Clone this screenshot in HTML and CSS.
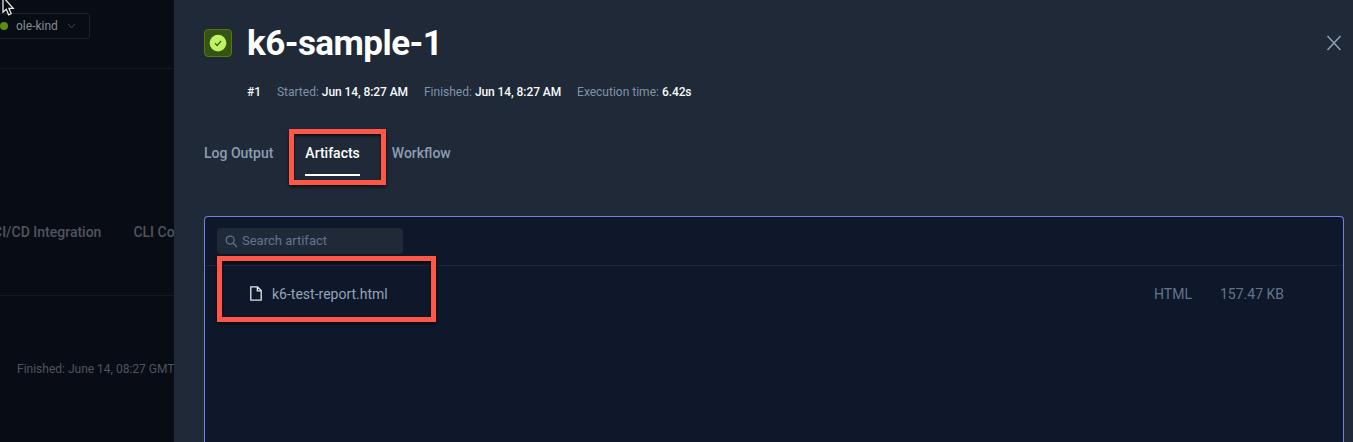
FILE: index.html
```html
<!DOCTYPE html>
<html lang="en">
<head>
<meta charset="utf-8">
<title>k6-sample-1</title>
<link rel="stylesheet" href="styles.css">
</head>
<body>
<div class="app">
  <aside class="page">
    <header class="topbar">
      <div class="cluster">
        <span class="status-dot"></span>
        <span class="cluster-name">ole-kind</span>
        <svg class="chevron" viewBox="0 0 9 6"><path d="M1 .8 4.5 5 8 .8"/></svg>
      </div>
    </header>
    <nav class="page-tabs"><span>CI/CD Integration</span><span>CLI Commands</span></nav>
    <p class="finished">Finished: June 14, 08:27 GMT</p>
  </aside>
  <main class="drawer">
    <header class="head">
      <span class="badge"><svg viewBox="0 0 28 28"><circle cx="14" cy="14.2" r="9" /><path d="M10.7 14.2 13.1 16.7 17.3 11.6"/></svg></span>
      <h1>k6-sample-1</h1>
      <svg class="close" viewBox="0 0 16 16"><path d="M1.5 1 14.5 15M14.5 1 1.5 15"/></svg>
    </header>
    <div class="meta">
      <span class="run"><b>#1</b></span>
      <span class="started">Started: <b>Jun 14, 8:27 AM</b></span>
      <span class="ended">Finished: <b>Jun 14, 8:27 AM</b></span>
      <span class="duration">Execution time: <b>6.42s</b></span>
    </div>
    <nav class="tabs">
      <span class="tab log">Log Output</span>
      <span class="tab active">Artifacts</span>
      <span class="tab workflow">Workflow</span>
    </nav>
    <section class="panel">
      <div class="toolbar">
        <div class="search">
          <svg viewBox="0 0 13 13"><circle cx="5.1" cy="5.1" r="4"/><path d="M8 8 12 12"/></svg>
          <span>Search artifact</span>
        </div>
      </div>
      <div class="file">
        <svg viewBox="0 0 12 15"><path d="M.8.8H7.5L11.2 4.6V14.2H.8ZM7.3 1V4.8H11"/></svg>
        <span class="file-name">k6-test-report.html</span>
        <span class="type">HTML</span>
        <span class="size">157.47 KB</span>
      </div>
    </section>
  </main>
  <div class="mark mark-tab"></div>
  <div class="mark mark-file"></div>
  <svg class="cursor" viewBox="0 0 16 18"><path d="M3-3V12L6.3 9.2 8.6 14.8 11.2 13.6 8.9 8.3H13.2Z"/></svg>
</div>
</body>
</html>
```
FILE: styles.css
```css
* { box-sizing: border-box; }
body { margin: 0; font-family: Roboto, "Liberation Sans", sans-serif; background: #080c15; }
.app { position: relative; display: flex; width: 1353px; height: 442px; overflow: hidden; }

.page { width: 174px; flex: none; overflow: hidden; white-space: nowrap; background: #080c15; color: #50545d; }
.topbar { height: 69px; padding-top: 13px; border-bottom: 1px solid #121720; }
.cluster { display: flex; align-items: center; width: 91px; height: 26px; margin-left: -1px; border: 1px solid #1c212a; border-radius: 0 3px 3px 0; }
.status-dot { width: 8px; height: 8px; border-radius: 50%; background: #5b8c16; }
.cluster-name { margin-left: 8px; font-size: 12px; color: #878a90; }
.chevron { width: 9px; height: 6px; margin-left: 9px; fill: none; stroke: #41464f; }
.page-tabs { display: flex; gap: 32px; height: 227px; margin-left: -7px; padding-top: 152px; border-bottom: 1px solid #121720; font-size: 14px; line-height: 22px; font-weight: 500; }
.finished { margin: 63px 0 0 17px; font-size: 12px; line-height: 20px; }

.drawer { display: flex; flex-direction: column; flex: 1; padding: 21px 9px 0 30px; background: #1f2938; }
.head { display: flex; align-items: center; height: 44px; padding-right: 2px; }
.badge { display: flex; width: 28px; height: 28px; }
.badge svg { width: 28px; height: 28px; border: 1px solid #4d7c0f; border-radius: 4px; background: #365314; fill: #bef264; }
.badge path { fill: none; stroke: #365314; stroke-width: 1.3; }
h1 { margin: 2px 0 0 15px; font-size: 35px; line-height: 44px; font-weight: 700; letter-spacing: -.55px; color: #fff; }
.close { width: 16px; height: 16px; margin-left: auto; fill: none; stroke: #94a3b8; stroke-width: 1.4; }
.meta { display: flex; gap: 16px; margin: 17px 0 0 43px; font-size: 12px; line-height: 20px; color: #8292a8; white-space: nowrap; }
.meta b { font-weight: 500; letter-spacing: -.08px; color: #f8fafc; }
.tabs { display: flex; gap: 32px; height: 34px; margin-top: 40px; font-size: 14px; line-height: 22px; font-weight: 500; color: #8d9db2; }
.tab { height: 34px; }
.active { border-bottom: 2px solid #fff; color: #fff; }
.panel { flex: 1; margin-top: 40px; border: 1px solid #7480e4; border-bottom: 0; border-radius: 4px 4px 0 0; background: #0f172a; }
.toolbar { height: 49px; padding: 11px 12px 0; border-bottom: 1px solid #1c2638; }
.search { display: flex; align-items: center; gap: 4px; width: 186px; height: 26px; padding-left: 8px; border-radius: 4px; background: #1f2938; color: #64748b; font-size: 13px; }
.search span { padding-bottom: 1px; }
.search svg { width: 13px; height: 13px; fill: none; stroke: #64748b; stroke-width: 1.2; }
.file { display: flex; align-items: center; height: 55px; padding: 0 59px 0 45px; color: #64748b; font-size: 14px; }
.file svg { width: 12px; height: 15px; margin-right: 10px; fill: none; stroke: #e2e8f0; stroke-width: 1.3; }
.file-name { color: #94a3b8; }
.type { margin-left: auto; }
.size { margin-left: 28px; }

.mark { position: absolute; border: 5px solid #ff5648; box-shadow: 0 2px 3px rgba(0,0,0,.65), inset 0 2px 3px rgba(0,0,0,.65); }
.mark-tab { left: 289px; top: 129px; width: 97px; height: 56px; }
.mark-file { left: 217px; top: 256px; width: 219px; height: 66px; }
.cursor { position: absolute; left: 0; top: 0; width: 16px; height: 18px; fill: #05070b; stroke: #e5e5e5; stroke-width: 1.3; }
```
